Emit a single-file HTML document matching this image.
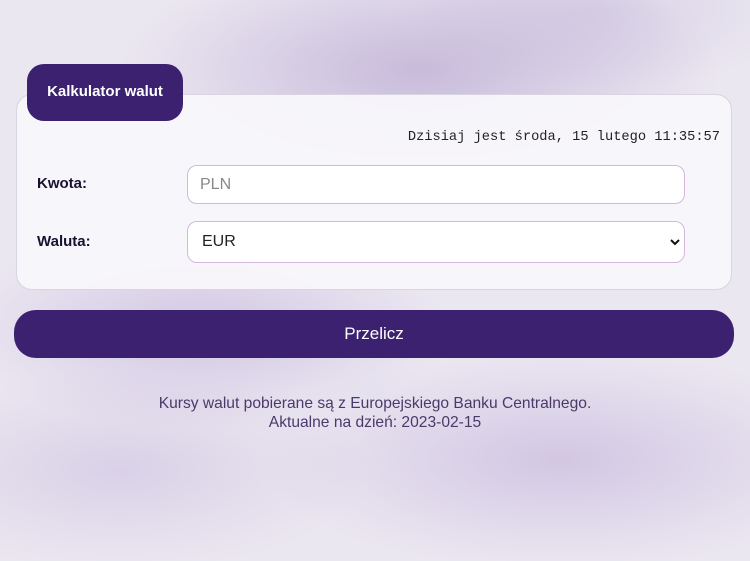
<!DOCTYPE html>
<html><head><meta charset="utf-8"><style>
html,body{margin:0;width:750px;height:561px;overflow:hidden;font-family:"Liberation Sans",sans-serif}
body{background:
radial-gradient(ellipse 300px 120px at 420px 70px,rgba(170,150,200,.55),transparent),
radial-gradient(ellipse 250px 100px at 200px 330px,rgba(180,160,210,.45),transparent),
radial-gradient(ellipse 300px 110px at 560px 460px,rgba(180,160,210,.45),transparent),
radial-gradient(ellipse 250px 100px at 120px 470px,rgba(190,175,215,.4),transparent),
radial-gradient(ellipse 200px 80px at 600px 10px,rgba(200,190,220,.5),transparent),
#ebe7f1;position:relative}
.card{position:absolute;left:16px;top:94px;width:714px;height:194px;background:rgba(248,247,251,.95);border:1px solid #d8d4e0;border-radius:16px}
.tab{position:absolute;left:27px;top:64px;width:156px;height:57px;background:#3b2170;border-radius:17px;color:#fff;font-weight:bold;font-size:15px;line-height:56px;text-align:center}
.date{position:absolute;right:30px;top:130px;font-family:"Liberation Mono",monospace;font-size:13.7px;color:#222}
.lbl{position:absolute;left:37px;font-weight:bold;font-size:15px;color:#1a1030}
.in{position:absolute;left:187px;width:498px;background:#fff;border:1px solid #d6b7df;border-radius:10px;box-sizing:border-box;font-size:16px;padding-left:12px}
.btn{position:absolute;left:14px;top:310px;width:720px;height:48px;background:#3b2170;border-radius:22px;color:#fff;font-size:17px;text-align:center;line-height:48px}
.foot{position:absolute;left:0;width:750px;top:394px;text-align:center;color:#4a3a6a;font-size:15.6px;line-height:19px}
</style></head><body>
<div class="card"></div>
<div class="tab">Kalkulator walut</div>
<div class="date">Dzisiaj jest środa, 15 lutego 11:35:57</div>
<div class="lbl" style="top:175px">Kwota:</div>
<div class="lbl" style="top:233px">Waluta:</div>
<div class="in" style="top:165px;height:39px;line-height:37px;color:#888">PLN</div>
<div class="in" style="top:221px;height:42px;line-height:40px;color:#222;padding-left:14px">EUR<svg style="position:absolute;right:4px;top:16px" width="10" height="8" viewBox="0 0 10 8"><path d="M1 2l4 4 4-4" stroke="#111" stroke-width="2" fill="none"/></svg></div>
<div class="btn">Przelicz</div>
<div class="foot">Kursy walut pobierane są z Europejskiego Banku Centralnego.<br>Aktualne na dzień: 2023-02-15</div>
</body></html>
